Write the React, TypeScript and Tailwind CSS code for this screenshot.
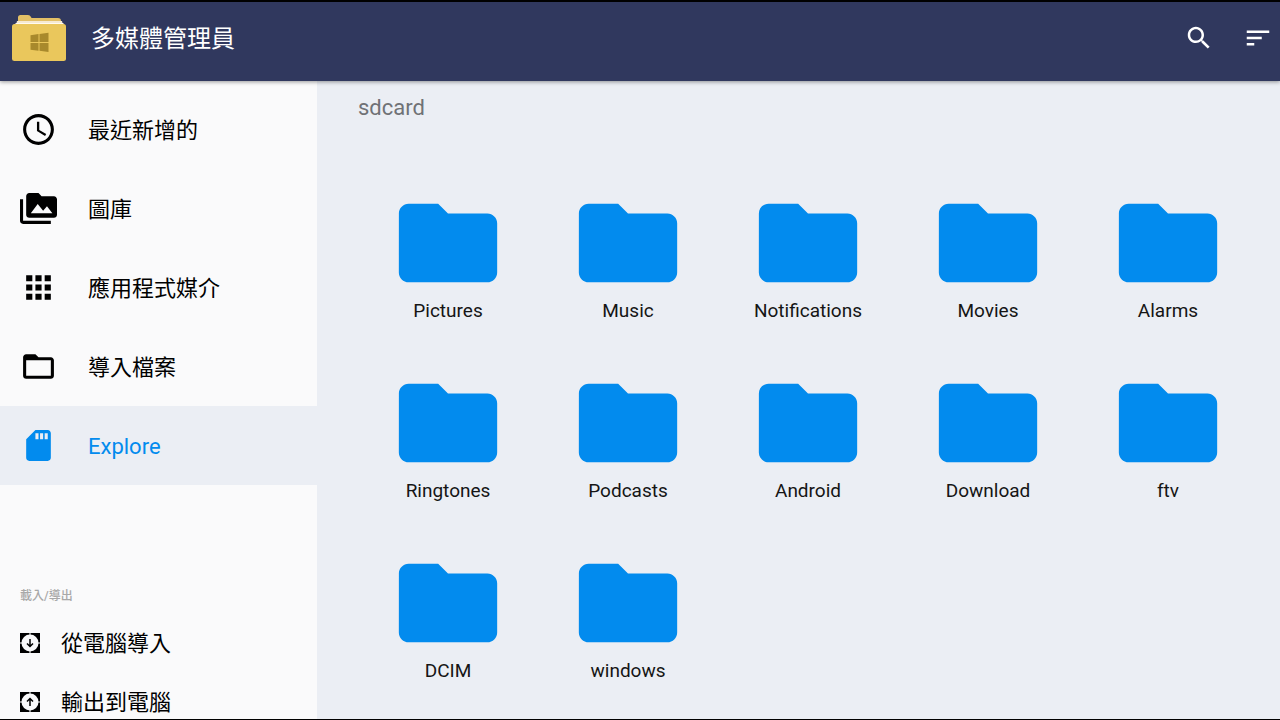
import { useState } from 'react';

const FOLDER = 'M10 4H4c-1.1 0-1.99.9-1.99 2L2 18c0 1.1.9 2 2 2h16c1.1 0 2-.9 2-2V8c0-1.1-.9-2-2-2h-8l-2-2z';

const navItems = [
  {
    label: '最近新增的',
    icon: 'M11.99 2C6.47 2 2 6.48 2 12s4.47 10 9.99 10C17.52 22 22 17.52 22 12S17.52 2 11.99 2zM12 20c-4.42 0-8-3.58-8-8s3.58-8 8-8 8 3.58 8 8-3.58 8-8 8zm.5-13H11v6l5.25 3.15.75-1.23-4.5-2.67z',
  },
  {
    label: '圖庫',
    icon: 'M2 6H0v5h.01L0 20c0 1.1.9 2 2 2h18v-2H2V6zm20-2h-8l-2-2H6c-1.1 0-1.99.9-1.99 2L4 16c0 1.1.9 2 2 2h16c1.1 0 2-.9 2-2V6c0-1.1-.9-2-2-2zM7 15l4.5-6 3.5 4.51 2.5-3.01L21 15H7z',
  },
  {
    label: '應用程式媒介',
    icon: 'M4 8h4V4H4v4zm6 12h4v-4h-4v4zm-6 0h4v-4H4v4zm0-6h4v-4H4v4zm6 0h4v-4h-4v4zm6-10v4h4V4h-4zm-6 4h4V4h-4v4zm6 6h4v-4h-4v4zm0 6h4v-4h-4v4z',
  },
  {
    label: '導入檔案',
    icon: 'M20 6h-8l-2-2H4c-1.1 0-1.99.9-1.99 2L2 18c0 1.1.9 2 2 2h16c1.1 0 2-.9 2-2V8c0-1.1-.9-2-2-2zm0 12H4V8h16v10z',
  },
  {
    label: 'Explore',
    icon: 'M18 2h-8L4.02 8 4 20c0 1.1.9 2 2 2h12c1.1 0 2-.9 2-2V4c0-1.1-.9-2-2-2zm-6 6h-2V4h2v4zm3 0h-2V4h2v4zm3 0h-2V4h2v4z',
  },
];

const transfers = [
  { label: '從電腦導入', arrow: 'M10 6v7.5M7 10.5l3 3 3-3' },
  { label: '輸出到電腦', arrow: 'M10 14V6.5M7 9.5l3-3 3 3' },
];

const folders = [
  'Pictures', 'Music', 'Notifications', 'Movies', 'Alarms',
  'Ringtones', 'Podcasts', 'Android', 'Download', 'ftv',
  'DCIM', 'windows',
];

function Icon({ d, className }: { d: string; className: string }) {
  return (
    <svg viewBox="0 0 24 24" fill="currentColor" aria-hidden="true" className={className}>
      <path d={d} />
    </svg>
  );
}

function Logo() {
  return (
    <svg viewBox="0 0 54 48" aria-hidden="true" className="h-12 w-[54px] shrink-0">
      <path d="M6 12V3.5Q6 1 8.5 1H16q2 0 3 2l.5 1H46q3 0 3 3v6H6z" fill="#e2bf66" />
      <path d="M5 7h45l1 4H4z" fill="#f6ead2" />
      <path d="M3.5 9h48v5h-48z" fill="#fffaf0" />
      <rect y="10" width="54" height="37" rx="2.5" fill="#eac75c" />
      <path d="M18.5 21.2l8-1.1V28h-8zM27.5 20l9-1.3V28h-9zM18.5 29h8v7.8l-8-1zM27.5 29h9v9l-9-1.2z" fill="#a8892c" />
    </svg>
  );
}

export default function App() {
  const [active, setActive] = useState('Explore');

  return (
    <div className="flex h-screen flex-col overflow-hidden border-t-2 border-b border-black bg-[#ebeef4] font-[Roboto,'Noto_Sans_CJK_TC',sans-serif]">
      <header className="relative flex h-[79px] shrink-0 items-start bg-[#30385e] pt-3 pr-[7px] pl-3 text-white shadow-[0_1px_4px_rgba(0,0,0,0.4)]">
        <Logo />
        <h1 className="ml-[25px] flex-1 text-2xl leading-[50px]">多媒體管理員</h1>
        <div className="flex h-12 items-center gap-[29px]">
          <button aria-label="Search">
            <Icon
              className="size-[30px]"
              d="M15.5 14h-.79l-.28-.27C15.41 12.59 16 11.11 16 9.5 16 5.91 13.09 3 9.5 3S3 5.91 3 9.5 5.91 16 9.5 16c1.61 0 3.09-.59 4.23-1.57l.27.28v.79l5 4.99L20.49 19l-4.99-5zm-6 0C7.01 14 5 11.99 5 9.5S7.01 5 9.5 5 14 7.01 14 9.5 11.99 14 9.5 14z"
            />
          </button>
          <button aria-label="Sort">
            <Icon className="size-[30px]" d="M3 18h6v-2H3v2zM3 6v2h18V6H3zm0 7h12v-2H3v2z" />
          </button>
        </div>
      </header>

      <div className="flex min-h-0 flex-1">
        <aside className="w-[317px] shrink-0 overflow-hidden bg-[#fafafb] pt-[9px]">
          <nav>
            {navItems.map((item) => (
              <button
                key={item.label}
                onClick={() => setActive(item.label)}
                className={`flex h-[79px] w-full items-center gap-[31px] pl-5 text-[22px] ${
                  active === item.label ? 'bg-[#ebeef4] text-[#028bee]' : 'text-black'
                }`}
              >
                <Icon d={item.icon} className="size-[37px]" />
                <span className="pt-0.5">{item.label}</span>
              </button>
            ))}
          </nav>

          <section className="mt-[100px]">
            <h2 className="pl-5 text-xs leading-[22px] font-medium text-[#a8a8a8]">載入/導出</h2>
            <div className="mt-1.5">
              {transfers.map((item) => (
                <button key={item.label} className="flex h-[59px] w-full items-center gap-[21px] pl-5 text-[22px] text-black">
                  <svg viewBox="0 0 20 20" aria-hidden="true" className="size-5">
                    <path d="M0 0h20v20H0z" />
                    <circle cx="10" cy="10" r="8.5" fill="#fafafb" />
                    <path d="M10 0v3M10 17v3M0 10h3M17 10h3" stroke="#fafafb" />
                    <path d={item.arrow} fill="none" stroke="#000" strokeWidth="1.5" />
                  </svg>
                  <span className="pt-0.5">{item.label}</span>
                </button>
              ))}
            </div>
          </section>
        </aside>

        <main className="min-w-0 flex-1 pr-[22px] pl-[41px]">
          <p className="pt-[13px] text-[22px] leading-7 text-[#707276]">sdcard</p>
          <div className="mt-[62px] grid grid-cols-5">
            {folders.map((name) => (
              <button key={name} className="flex h-[180px] flex-col items-center justify-start text-[19px] leading-[18px] text-[#151515]">
                <Icon d={FOLDER} className="size-[118px] text-[#028bee]" />
                <span>{name}</span>
              </button>
            ))}
          </div>
        </main>
      </div>
    </div>
  );
}
